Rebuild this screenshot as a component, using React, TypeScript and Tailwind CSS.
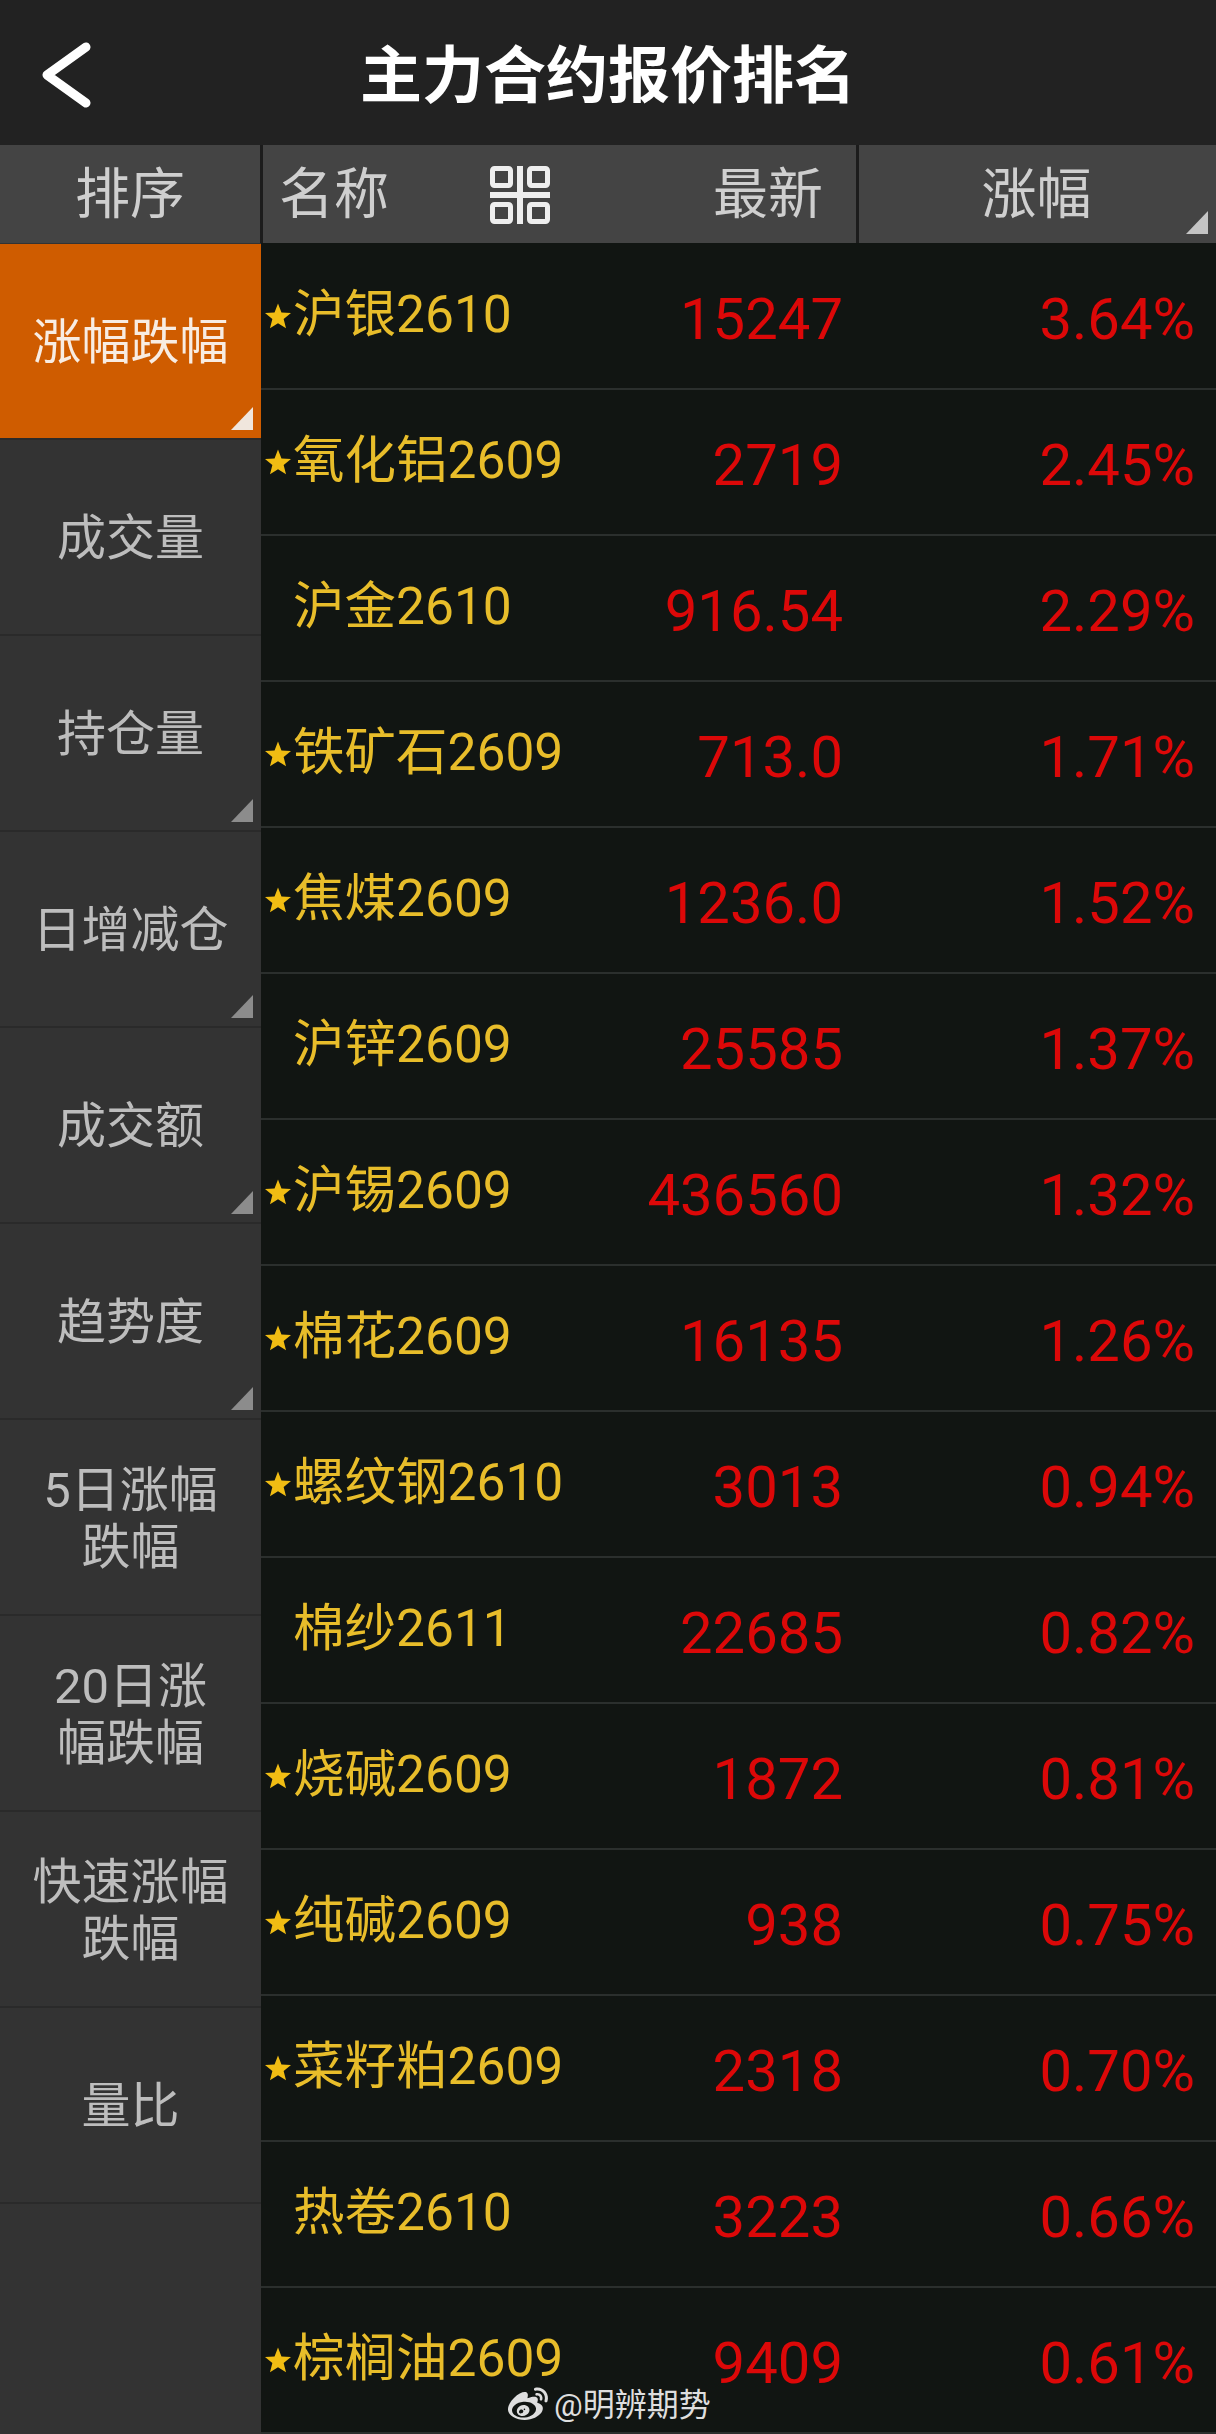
import { FaWeibo } from "react-icons/fa";

const FONT = "font-['Roboto','Noto_Sans_CJK_SC',sans-serif]";

interface Quote {
  name: string;
  price: string;
  change: string;
  starred: boolean;
}

const QUOTES: Quote[] = [
  { name: "沪银2610", price: "15247", change: "3.64%", starred: true },
  { name: "氧化铝2609", price: "2719", change: "2.45%", starred: true },
  { name: "沪金2610", price: "916.54", change: "2.29%", starred: false },
  { name: "铁矿石2609", price: "713.0", change: "1.71%", starred: true },
  { name: "焦煤2609", price: "1236.0", change: "1.52%", starred: true },
  { name: "沪锌2609", price: "25585", change: "1.37%", starred: false },
  { name: "沪锡2609", price: "436560", change: "1.32%", starred: true },
  { name: "棉花2609", price: "16135", change: "1.26%", starred: true },
  { name: "螺纹钢2610", price: "3013", change: "0.94%", starred: true },
  { name: "棉纱2611", price: "22685", change: "0.82%", starred: false },
  { name: "烧碱2609", price: "1872", change: "0.81%", starred: true },
  { name: "纯碱2609", price: "938", change: "0.75%", starred: true },
  { name: "菜籽粕2609", price: "2318", change: "0.70%", starred: true },
  { name: "热卷2610", price: "3223", change: "0.66%", starred: false },
  { name: "棕榈油2609", price: "9409", change: "0.61%", starred: true },
];

const SORTS: { lines: string[]; corner: boolean }[] = [
  { lines: ["涨幅跌幅"], corner: true },
  { lines: ["成交量"], corner: false },
  { lines: ["持仓量"], corner: true },
  { lines: ["日增减仓"], corner: true },
  { lines: ["成交额"], corner: true },
  { lines: ["趋势度"], corner: true },
  { lines: ["5日涨幅", "跌幅"], corner: false },
  { lines: ["20日涨", "幅跌幅"], corner: false },
  { lines: ["快速涨幅", "跌幅"], corner: false },
  { lines: ["量比"], corner: false },
];

function Corner({ className }: { className: string }) {
  return (
    <svg viewBox="0 0 22 23" className={`absolute h-[23px] w-[22px] ${className}`}>
      <path d="M22 0V23H0Z" fill="currentColor" />
    </svg>
  );
}

function Star() {
  return (
    <svg viewBox="0 0 24 24" className="h-[26px] w-[26px] shrink-0 text-[#f1bd13]">
      <path
        d="M12 0.5l3.2 8.2 8.8.5-6.8 5.6 2.2 8.6L12 18.6l-7.4 4.8 2.2-8.6L0 9.2l8.8-.5z"
        fill="currentColor"
      />
    </svg>
  );
}

function GridIcon() {
  return (
    <svg viewBox="0 0 60 58" className="ml-[101px] mt-[2px] h-[58px] w-[60px] shrink-0">
      <g fill="none" stroke="#eeeeee" strokeWidth="5">
        <rect x="2.5" y="2.5" width="18" height="17" rx="2" />
        <rect x="39.5" y="2.5" width="18" height="17" rx="2" />
        <rect x="2.5" y="38.5" width="18" height="17" rx="2" />
        <rect x="39.5" y="38.5" width="18" height="17" rx="2" />
      </g>
      <path d="M0 26h60v6H0zM27 0h6v58h-6z" fill="#eeeeee" />
    </svg>
  );
}

export default function App() {
  return (
    <div className={`relative h-[2434px] w-[1216px] overflow-hidden bg-[#111512] ${FONT}`}>
      <header className="relative flex h-[145px] items-center justify-center bg-[#222222]">
        <svg viewBox="0 0 50 66" className="absolute left-[41px] top-[42px] h-[66px] w-[50px]">
          <path
            d="M45 5L6 33l39 28"
            fill="none"
            stroke="white"
            strokeWidth="9"
            strokeLinecap="round"
            strokeLinejoin="round"
          />
        </svg>
        <h1 className="pt-[9px] text-[62px] font-bold leading-none text-white">主力合约报价排名</h1>
      </header>

      <div className="flex h-[98px] bg-[#1c1c1c] text-[55px] leading-none text-[#cfcfcf]">
        <div className="flex w-[260px] items-center justify-center bg-[#444444]">排序</div>
        <div className="ml-[3px] flex w-[593px] items-center bg-[#444444] pl-[16px]">
          <span>名称</span>
          <GridIcon />
          <span className="ml-auto pr-[33px]">最新</span>
        </div>
        <div className="relative ml-[3px] flex flex-1 items-center justify-center bg-[#444444] pr-[2px]">
          涨幅
          <Corner className="bottom-[9px] right-[8px] text-[#c4c4c4]" />
        </div>
      </div>

      <div className="flex">
        <nav className="flex h-[2191px] w-[261px] shrink-0 flex-col bg-[#333333] pt-[1px]">
          {SORTS.map((sort, i) => (
            <div
              key={sort.lines.join("")}
              className={`relative flex h-[196px] shrink-0 flex-col items-center justify-center border-b-2 border-[#2a2a2a] pt-[3px] text-[49px] leading-[57px] ${
                i === 0 ? "bg-[#cf5c00] text-[#f8ece2]" : "text-[#bdbdbd]"
              }`}
            >
              {sort.lines.map((line) => (
                <span key={line}>{line}</span>
              ))}
              {sort.corner && (
                <Corner
                  className={`bottom-[8px] right-[8px] ${i === 0 ? "text-[#f0e6dd]" : "text-[#8c8c8c]"}`}
                />
              )}
            </div>
          ))}
        </nav>

        <div className="flex-1 pt-[1px]">
          {QUOTES.map((quote) => (
            <div key={quote.name} className="flex h-[146px] items-center border-b-2 border-[#2b2f2d]">
              <div className="flex w-[30px] justify-end">{quote.starred && <Star />}</div>
              <div className="ml-[2px] flex-1 pb-[2px] text-[51.5px] leading-none text-[#e8bd2a]">
                {quote.name}
              </div>
              <div className="pt-[6px] text-right text-[58px] leading-none text-[#dc0808]">
                {quote.price}
              </div>
              <div className="w-[373px] pr-[21px] pt-[6px] text-right text-[58px] leading-none text-[#dc0808]">
                {quote.change}
              </div>
            </div>
          ))}
        </div>
      </div>

      <div className="absolute left-[505px] top-[2385px] flex items-center gap-[3px] text-[#dedede]">
        <FaWeibo className="h-[40px] w-[46px]" />
        <span className="text-[32px] leading-none">@明辨期势</span>
      </div>
    </div>
  );
}
